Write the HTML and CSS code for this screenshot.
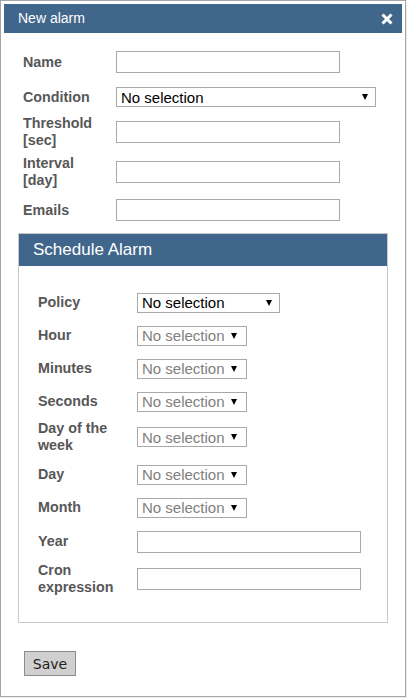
FILE: index.html
```html
<!DOCTYPE html>
<html lang="en">
<head>
<meta charset="utf-8">
<title>New alarm</title>
<link rel="stylesheet" href="styles.css">
</head>
<body>
<div class="dialog">
  <div class="titlebar">
    <span class="title">New alarm</span>
    <span class="close" aria-label="close">
      <svg width="12" height="12" viewBox="0 0 12 12"><path d="M1.5 1.5 L10.5 10.5 M10.5 1.5 L1.5 10.5" stroke="#fff" stroke-width="3" stroke-linecap="butt"/></svg>
    </span>
  </div>
  <div class="content">
    <div class="form main-form">
      <label class="lbl">Name</label>
      <input class="field wide" type="text">
      <label class="lbl">Condition</label>
      <div class="select cond"><span>No selection</span><i class="caret"></i></div>
      <label class="lbl">Threshold<br>[sec]</label>
      <input class="field wide" type="text">
      <label class="lbl">Interval<br>[day]</label>
      <input class="field wide" type="text">
      <label class="lbl">Emails</label>
      <input class="field wide" type="text">
    </div>

    <div class="schedule">
      <div class="schedule-head">Schedule Alarm</div>
      <div class="form sched-form">
        <label class="lbl">Policy</label>
        <div class="select policy"><span>No selection</span><i class="caret"></i></div>
        <label class="lbl">Hour</label>
        <div class="select small disabled"><span>No selection</span><i class="caret"></i></div>
        <label class="lbl">Minutes</label>
        <div class="select small disabled"><span>No selection</span><i class="caret"></i></div>
        <label class="lbl">Seconds</label>
        <div class="select small disabled"><span>No selection</span><i class="caret"></i></div>
        <label class="lbl">Day of the<br>week</label>
        <div class="select small disabled"><span>No selection</span><i class="caret"></i></div>
        <label class="lbl">Day</label>
        <div class="select small disabled"><span>No selection</span><i class="caret"></i></div>
        <label class="lbl">Month</label>
        <div class="select small disabled"><span>No selection</span><i class="caret"></i></div>
        <label class="lbl">Year</label>
        <input class="field wide" type="text">
        <label class="lbl">Cron<br>expression</label>
        <input class="field wide" type="text">
      </div>
    </div>

    <div class="actions">
      <button class="btn" type="button">Save</button>
    </div>
  </div>
</div>
</body>
</html>
```

FILE: styles.css
```css
html, body {
  margin: 0;
  padding: 0;
}
body {
  background: #ececec;
  font-family: "Liberation Sans", Arial, sans-serif;
}
.dialog {
  box-sizing: border-box;
  width: 406px;
  height: 697px;
  border: 1px solid #a6a6a6;
  padding: 3px;
  background: #fff;
}
.titlebar {
  height: 29px;
  background: #41668b;
  display: flex;
  align-items: center;
  justify-content: space-between;
  padding: 0 9px 0 14px;
}
.title {
  color: #fff;
  font-size: 14px;
  line-height: 29px;
}
.close {
  display: flex;
  width: 12px;
  height: 12px;
}
.content {
  padding-top: 11px;
}
.form {
  display: grid;
  align-items: center;
}
.main-form {
  padding-left: 19px;
  grid-template-columns: 93px 1fr;
  grid-template-rows: 36px 34px 36px 44px 32px;
}
.lbl {
  font-weight: bold;
  font-size: 14.3px;
  line-height: 17px;
  color: #575757;
}
.field {
  box-sizing: border-box;
  height: 22px;
  border: 1px solid #a9a9a9;
  background: #fff;
  margin: 0;
  padding: 0 4px;
  font: 14px "Liberation Sans", Arial, sans-serif;
}
.field.wide {
  width: 224px;
}
.select {
  box-sizing: border-box;
  height: 20px;
  border: 1px solid #a9a9a9;
  background: #fff;
  display: flex;
  align-items: center;
  justify-content: space-between;
  padding: 0 7px 0 4px;
  font-size: 15px;
  color: #000;
}
.select.cond {
  width: 260px;
}
.select.policy {
  width: 143px;
}
.select.small {
  width: 110px;
  padding-right: 9px;
}
.select.disabled {
  color: #808080;
}
.caret {
  width: 0;
  height: 0;
  border-left: 3px solid transparent;
  border-right: 3px solid transparent;
  border-top: 6px solid #000;
}
.schedule {
  margin: 7px 14px 0 14px;
  border: 1px solid #c9c9c9;
}
.schedule-head {
  height: 32px;
  line-height: 32px;
  background: #41668b;
  color: #fff;
  font-size: 17px;
  padding-left: 14px;
}
.sched-form {
  padding: 20px 0 26px 19px;
  grid-template-columns: 99px 1fr;
  grid-template-rows: 33px 33px 33px 33px 38px 37px 29px 39px 35px;
}
.actions {
  padding: 28px 0 0 20px;
}
.btn {
  box-sizing: border-box;
  width: 52px;
  height: 25px;
  margin: 0;
  padding: 0;
  background: #d0d0d0;
  border: 1px solid #8c8c8c;
  border-radius: 0;
  font: 14px "DejaVu Sans", Verdana, sans-serif;
  color: #222;
}
```
